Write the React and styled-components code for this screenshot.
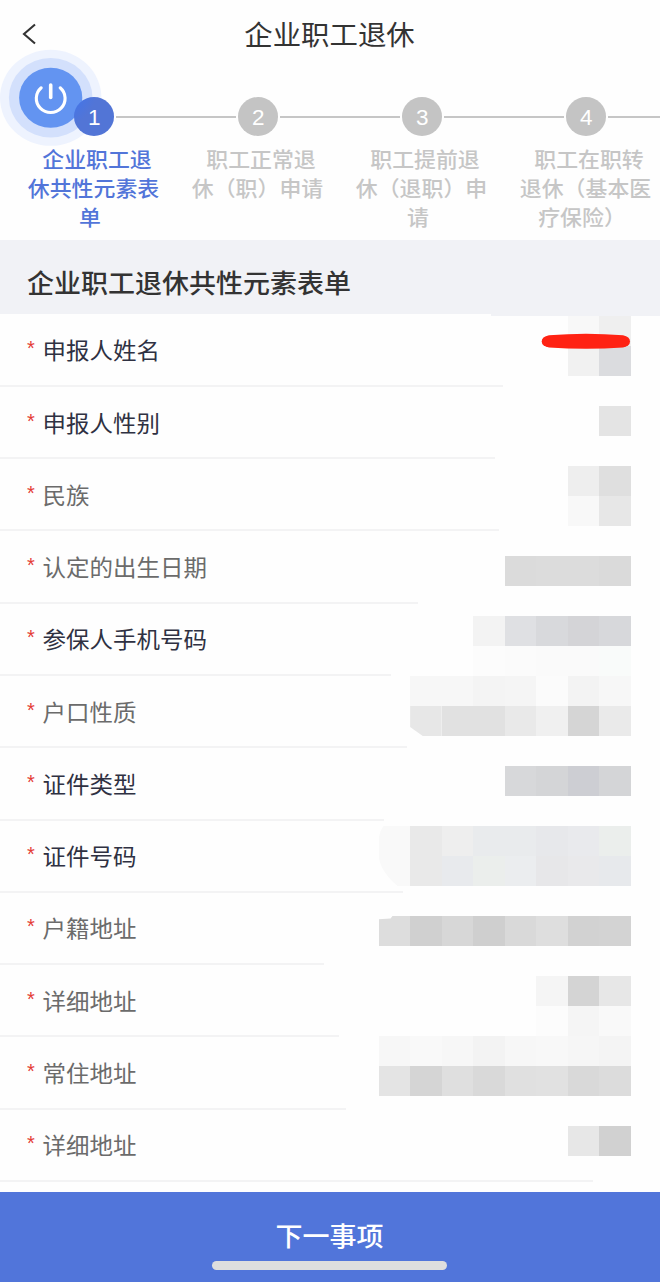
import React from 'react'
import styled, { createGlobalStyle } from 'styled-components'

const GlobalStyle = createGlobalStyle`
  * {
    box-sizing: border-box;
  }

  body {
    margin: 0;
    background: #fff;
    font-family: 'Noto Sans CJK SC', 'Noto Sans', sans-serif;
  }
`

const Page = styled.div`
  position: relative;
  display: flex;
  flex-direction: column;
  width: 660px;
  height: 1282px;
  overflow: hidden;
  background: #fefefe;
`

const NavBar = styled.header`
  display: grid;
  grid-template-columns: 59px 1fr 60px;
  align-items: center;
  height: 67px;
  flex: none;
`

const BackButton = styled.a`
  display: flex;
  padding-left: 22px;
`

const Title = styled.h1`
  margin: 0;
  padding-bottom: 1px;
  font-size: 28.4px;
  line-height: 40px;
  font-weight: 400;
  text-align: center;
  color: #333;
  transform: scaleY(0.96);
`

const Steps = styled.div`
  height: 173px;
  flex: none;
  padding-top: 30px;
`

const Rail = styled.div`
  display: flex;
  align-items: center;
  padding-left: 74px;
  overflow: hidden;
`

const StepDot = styled.div`
  flex: none;
  display: flex;
  align-items: center;
  justify-content: center;
  width: 40.4px;
  height: 39px;
  padding-top: 2px;
  border-radius: 50%;
  background: ${({ $active }) => ($active
    ? 'radial-gradient(circle at -70% -45%, #4375ea 34px, #5275d6 54px)'
    : '#c4c4c4')};
  color: #fff;
  font-family: 'Liberation Sans', sans-serif;
  font-size: 22.5px;
  z-index: 1;
`

const Connector = styled.div`
  flex: none;
  width: 120px;
  height: 1.5px;
  margin: 1px 1.8px 0;
  background: #c6c6c6;
`

const Labels = styled.div`
  display: grid;
  grid-template-columns: repeat(4, 164px);
  padding: 8px 0 0 11.5px;
`

const StepLabel = styled.div`
  font-size: 21.9px;
  line-height: 28.8px;
  font-weight: 500;
  text-align: center;
  white-space: nowrap;
  color: ${({ $active }) => ($active ? '#5275d9' : '#c6c6c6')};

  span {
    display: block;
    transform: scaleY(0.96);
  }

  span:first-child {
    padding-left: 7px;
  }

  span:nth-child(3) {
    padding-right: 7px;
  }
`

const SectionTitle = styled.h2`
  position: relative;
  flex: none;
  display: flex;
  align-items: center;
  height: 74px;
  margin: 0;
  padding: 8px 0 0 27px;
  background: #f1f2f6;
  font-size: 27px;
  font-weight: 500;
  color: #333;

  span {
    transform: scaleY(0.96);
  }

  &::after {
    content: '';
    position: absolute;
    top: 100%;
    right: 0;
    width: 169px;
    height: 2px;
    background: #f1f2f6;
  }
`

const List = styled.div`
  flex: 1;
  padding-top: 0.7px;
`

const Row = styled.div`
  display: flex;
  align-items: center;
  height: 72.28px;
  padding: 0 0 3px 27px;
  background: linear-gradient(#f3f3f4, #f3f3f4) no-repeat left bottom / ${({ $line }) => $line}px 2px;
`

const Required = styled.span`
  width: 15.5px;
  padding-bottom: 1px;
  font-family: 'Liberation Sans', sans-serif;
  font-size: 20px;
  color: #e43c36;
`

const RowLabel = styled.span`
  font-size: 23.5px;
  line-height: 34px;
  color: ${({ $strong }) => ($strong ? '#2f3142' : '#6b6b6b')};
  transform: scaleY(0.96);
`

const Mosaic = styled.div`
  position: absolute;
  top: 316px;
  left: 378.6px;
  display: grid;
  grid-template-columns: repeat(8, 31.56px);
  grid-auto-rows: 30px;
`

const Cell = styled.div`
  background: ${({ $color }) => $color};
  clip-path: ${({ $clip }) => $clip || 'none'};
`

const RedStroke = styled.svg`
  position: absolute;
  top: 333px;
  left: 541px;
`

const PowerBall = styled.svg`
  position: absolute;
  top: 49px;
  left: 0;
`

const Footer = styled.footer`
  flex: none;
  display: flex;
  flex-direction: column;
  align-items: center;
  height: 90px;
  padding: 23px 1px 0 0;
  background: #5175da;
`

const NextLabel = styled.div`
  font-size: 27px;
  line-height: 40px;
  font-weight: 500;
  color: #fff;
  transform: scaleY(0.96);
`

const HomeIndicator = styled.div`
  width: 235px;
  height: 8.5px;
  margin-top: 6px;
  border-radius: 5px;
  background: #dedede;
`

const steps = [
  ['企业职工退', '休共性元素表', '单'],
  ['职工正常退', '休（职）申请'],
  ['职工提前退', '休（退职）申', '请'],
  ['职工在职转', '退休（基本医', '疗保险）'],
]

const rows = [
  { label: '申报人姓名', strong: true, line: 503 },
  { label: '申报人性别', strong: true, line: 495 },
  { label: '民族', line: 499 },
  { label: '认定的出生日期', line: 418 },
  { label: '参保人手机号码', strong: true, line: 391 },
  { label: '户口性质', line: 407 },
  { label: '证件类型', strong: true, line: 384 },
  { label: '证件号码', strong: true, line: 403 },
  { label: '户籍地址', line: 324 },
  { label: '详细地址', line: 339 },
  { label: '常住地址', line: 346 },
  { label: '详细地址', line: 593 },
]

// one entry per mosaic row, coloured cells are aligned to the right edge
const mosaic = [
  ['#f8f8f8', '#efefef'],
  ['#f1f1f1', '#dbdcdf'],
  [],
  ['#e4e4e4'],
  [],
  ['#eeeeee', '#dfdfdf'],
  ['#f8f8f8', '#e7e7e7'],
  [],
  ['#dbdbdb', '#dcdcdc', '#dcdcdc', '#dadada'],
  [],
  ['#f3f3f3', '#dfe0e3', '#d8d9dc', '#d4d4d7', '#d7d8db'],
  ['#fcfcfc', '#fbfbfb', '#fafafa', '#fafafa', '#f9fbfa'],
  ['#f7f7f7', '#f7f7f7', '#f4f4f4', '#f5f5f5', '#fbfbfb', '#f3f3f3', '#f7f7f7'],
  ['#e7e7e7', '#e1e1e1', '#e1e1e1', '#e9e9e9', '#f0f0f0', '#d5d5d5', '#eaeaea'],
  [],
  ['#d7d8da', '#d4d5d7', '#cdced3', '#d4d5d7'],
  [],
  ['#f9f9f9', '#e9e9e9', '#eeeeee', '#e9ebed', '#e9ebed', '#e7e8eb', '#e9eaed', '#ebeeec'],
  ['#f9f9f9', '#e9e9e9', '#e8eaed', '#ebeeec', '#ebedef', '#e7e7e9', '#e9e9eb', '#e7e9ec'],
  [],
  ['#dddddd', '#d0d0d0', '#d7d7d7', '#cfcfcf', '#d9d9d9', '#dedede', '#d2d2d2', '#d3d3d3'],
  [],
  ['#f5f5f5', '#d4d4d4', '#e7e7e7'],
  ['#fcfcfc', '#f5f5f5', '#f9f9f9'],
  ['#f7f7f7', '#f9f9f9', '#f7f7f7', '#f3f3f3', '#f7f7f7', '#f8f8f8', '#f6f6f6', '#f4f4f4'],
  ['#e4e4e4', '#d5d5d5', '#dfdfdf', '#d9d9d9', '#e0e0e0', '#e1e1e1', '#d9d9d9', '#dcdcdc'],
  [],
  ['#e7e7e7', '#d1d1d1'],
]

// cells trimmed by the edge of the brush
const clips = {
  '13-1': 'polygon(0 0, 100% 0, 100% 100%, 40% 100%, 0 70%)',
  '17-0': 'path("M0 30 V14 Q1 5 5 0 H32 V30 Z")',
  '18-0': 'path("M0 0 H32 V30 H19 Q2 16 0 0 Z")',
  '20-0': 'polygon(0 11%, 38% 8%, 44% 0, 100% 0, 100% 100%, 0 100%)',
}

const mosaicCells = mosaic.flatMap((colors, row) => {
  const padded = [...Array(8 - colors.length).fill('transparent'), ...colors]
  return padded.map((color, col) => ({ key: `${row}-${col}`, color }))
})

export default function App() {
  return (
    <Page>
      <GlobalStyle />
      <NavBar>
        <BackButton>
          <svg width='15' height='22' viewBox='0 0 15 22' fill='none'>
            <path d='M13 1.5 L2 11 L13 20.5' stroke='#333' strokeWidth='2.1' />
          </svg>
        </BackButton>
        <Title>企业职工退休</Title>
      </NavBar>

      <PowerBall width='102' height='98' viewBox='0 0 102 98'>
        <ellipse cx='50.7' cy='48.8' rx='50.7' ry='48' fill='#eef3fe' />
        <ellipse cx='50.7' cy='48.8' rx='41.8' ry='39.8' fill='#d3e0fc' />
        <ellipse cx='50.7' cy='48.8' rx='31.6' ry='30' fill='#6394f1' />
        <path d='M41.2 38.8 A14.4 14.1 0 1 0 60.2 38.8' fill='none' stroke='#fff' strokeWidth='3.1' strokeLinecap='round' />
        <path d='M50.7 36 V48.4' stroke='#fff' strokeWidth='3.6' strokeLinecap='round' />
      </PowerBall>

      <Steps>
        <Rail>
          {steps.map((lines, i) => (
            <React.Fragment key={i}>
              <StepDot $active={i === 0}>{i + 1}</StepDot>
              <Connector />
            </React.Fragment>
          ))}
        </Rail>
        <Labels>
          {steps.map((lines, i) => (
            <StepLabel key={i} $active={i === 0}>
              {lines.map((line) => <span key={line}>{line}</span>)}
            </StepLabel>
          ))}
        </Labels>
      </Steps>

      <SectionTitle>
        <span>企业职工退休共性元素表单</span>
      </SectionTitle>

      <List>
        {rows.map(({ label, strong, line }, i) => (
          <Row key={i} $line={line}>
            <Required>*</Required>
            <RowLabel $strong={strong}>{label}</RowLabel>
          </Row>
        ))}
      </List>

      <Mosaic>
        {mosaicCells.map(({ key, color }) => (
          <Cell key={key} $color={color} $clip={clips[key]} />
        ))}
      </Mosaic>
      <RedStroke width='90' height='17' viewBox='0 0 90 17'>
        <path d='M8 2.2 Q45 -0.8 82 2.2 Q89 3.5 89 8.5 Q89 13 82 14.4 Q45 17 8 14.4 Q0.7 13 0.7 8.5 Q0.7 3.5 8 2.2 Z' fill='#ff2213' />
      </RedStroke>

      <Footer>
        <NextLabel>下一事项</NextLabel>
        <HomeIndicator />
      </Footer>
    </Page>
  )
}
